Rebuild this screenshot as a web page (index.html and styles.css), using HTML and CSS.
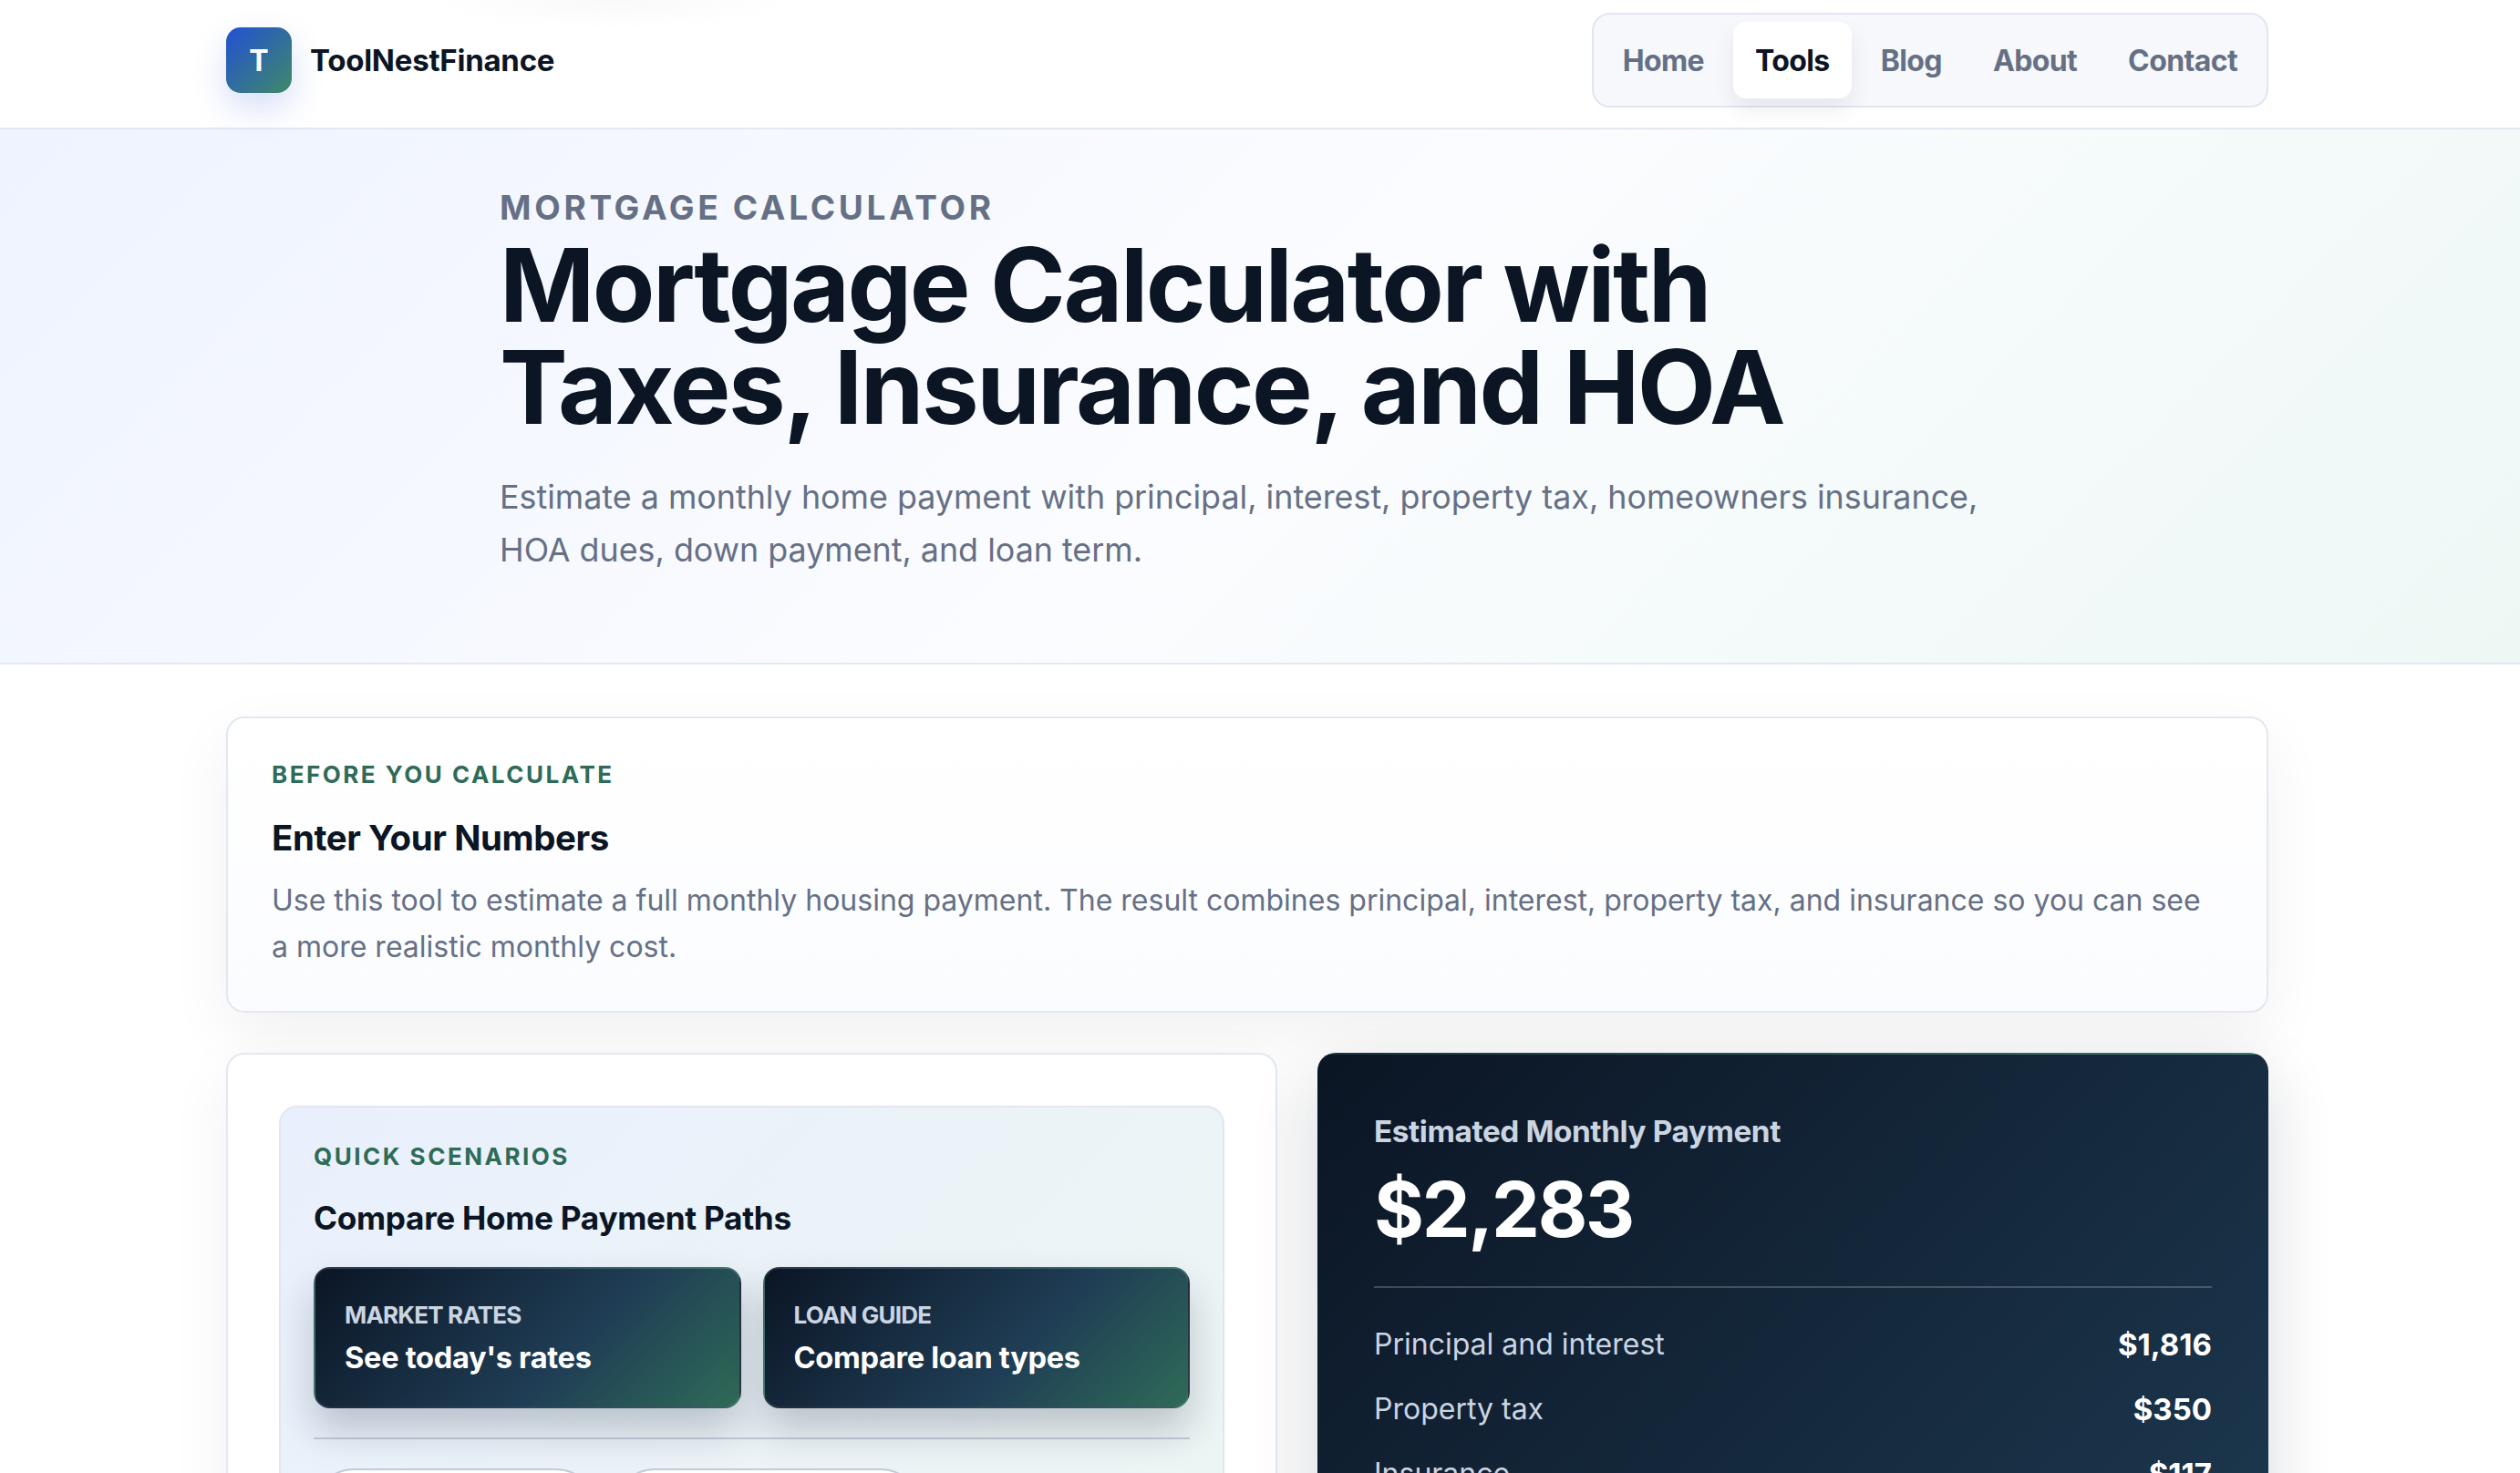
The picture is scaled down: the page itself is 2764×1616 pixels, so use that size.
FILE: index.html
```html
<!DOCTYPE html>
<html lang="en">
<head>
<meta charset="utf-8">
<title>Mortgage Calculator</title>
<link rel="stylesheet" href="styles.css">
</head>
<body>
<header class="site-header">
  <div class="wrap header-row">
    <a class="brand"><span class="brand-mark">T</span><span class="brand-name">ToolNestFinance</span></a>
    <nav class="nav">
      <a class="nav-link">Home</a>
      <a class="nav-link active">Tools</a>
      <a class="nav-link">Blog</a>
      <a class="nav-link">About</a>
      <a class="nav-link">Contact</a>
    </nav>
  </div>
</header>
<section class="hero">
  <div class="hero-inner">
    <p class="hero-kicker">MORTGAGE CALCULATOR</p>
    <h1 class="hero-title">Mortgage Calculator with Taxes, Insurance, and HOA</h1>
    <p class="hero-sub">Estimate a monthly home payment with principal, interest, property tax, homeowners insurance, HOA dues, down payment, and loan term.</p>
  </div>
</section>
<main class="wrap main">
  <section class="intro card">
    <p class="eyebrow">BEFORE YOU CALCULATE</p>
    <h2 class="intro-title">Enter Your Numbers</h2>
    <p class="intro-text">Use this tool to estimate a full monthly housing payment. The result combines principal, interest, property tax, and insurance so you can see a more realistic monthly cost.</p>
  </section>
  <div class="columns">
    <section class="form-card card">
      <div class="scenarios">
        <p class="eyebrow">QUICK SCENARIOS</p>
        <h3 class="scenarios-title">Compare Home Payment Paths</h3>
        <div class="link-grid">
          <a class="link-card"><span class="link-label">MARKET RATES</span><span class="link-text">See today's rates</span></a>
          <a class="link-card"><span class="link-label">LOAN GUIDE</span><span class="link-text">Compare loan types</span></a>
        </div>
        <div class="chips">
          <span class="chip chip-a"></span>
          <span class="chip chip-b"></span>
        </div>
      </div>
    </section>
    <aside class="result">
      <p class="result-label">Estimated Monthly Payment</p>
      <p class="result-value">$2,283</p>
      <div class="result-rows">
        <div class="result-row"><span>Principal and interest</span><strong>$1,816</strong></div>
        <div class="result-row"><span>Property tax</span><strong>$350</strong></div>
        <div class="result-row"><span>Insurance</span><strong>$117</strong></div>
      </div>
    </aside>
  </div>
</main>
</body>
</html>
```
FILE: styles.css
```css
* { box-sizing: border-box; }
html, body { margin: 0; height: 1616px; overflow: hidden; }
body { background: #fff; font-family: Inter, "Noto Sans", sans-serif; color: #0b1524; }
p, h1, h2, h3 { margin: 0; }
.wrap { width: 2240px; margin-left: 248px; }

.site-header { height: 142px; border-bottom: 2px solid #e2e8f0; background: radial-gradient(ellipse 200px 32px at 670px 0, #f9f9fa, rgba(255, 255, 255, 0)) #fff; }
.header-row { height: 140px; display: flex; align-items: center; justify-content: space-between; }
.brand { display: flex; align-items: center; gap: 20px; margin-top: -8px; }
.brand-mark { width: 72px; height: 72px; border-radius: 16px; background: linear-gradient(135deg, #2350d4, #3f8a68); color: #fff; font-size: 32px; font-weight: 700; display: flex; align-items: center; justify-content: center; box-shadow: 0 16px 36px rgba(35, 80, 212, .18); }
.brand-name { font-size: 33px; font-weight: 700; letter-spacing: -.25px; }
.nav { display: flex; height: 104px; padding: 8px; gap: 8px; background: #f7f8fc; border: 2px solid #e1e6f0; border-radius: 20px; margin-top: -8px; }
.nav-link { display: flex; align-items: center; padding: 0 24px; border-radius: 14px; font-size: 32px; font-weight: 700; color: #667085; letter-spacing: -.62px; }
.nav-link.active { background: #fff; color: #0b1524; box-shadow: 0 12px 24px rgba(15, 23, 42, .08); }

.hero { height: 587px; border-bottom: 2px solid #e2e8f0; background: linear-gradient(135deg, #eef3ff 0%, #fbfcff 50%, #edf8f5 100%); padding: 64px 0 0 548px; }
.hero-inner { width: 1668px; }
.hero-kicker { font-size: 37px; font-weight: 700; letter-spacing: 3.7px; color: #667085; line-height: 44px; }
.hero-title { font-size: 112px; font-weight: 700; letter-spacing: -2.5px; line-height: 112px; margin-top: 6px; color: #0b1524; }
.hero-sub { font-size: 35.84px; line-height: 58px; color: #667085; margin-top: 36px; }

.main { padding-top: 57px; }
.card { background: #fff; border: 2px solid #e2e8f0; border-radius: 20px; box-shadow: 0 24px 70px rgba(15, 23, 42, .06); }
.intro { height: 325px; padding: 46px 48px 0; background: linear-gradient(180deg, #fff, #fbfcff); }
.eyebrow { font-size: 26px; font-weight: 700; letter-spacing: 2.5px; color: #2f6b57; line-height: 32px; }
.intro-title { font-size: 38.4px; font-weight: 700; letter-spacing: -.4px; line-height: 46px; margin-top: 30px; }
.intro-text { font-size: 32px; line-height: 51px; color: #667085; margin-top: 20px; }
.columns { display: grid; grid-template-columns: 1153px 1043px; gap: 44px; margin-top: 44px; }
.form-card { height: 600px; padding: 56px; }
.scenarios { height: 600px; background: linear-gradient(135deg, #e9f0fd, #edf6f3); border: 2px solid #e1e6f0; border-radius: 20px; padding: 38px 36px; }
.scenarios-title { font-size: 35.2px; font-weight: 700; letter-spacing: -.3px; line-height: 44px; margin-top: 29px; }
.link-grid { display: grid; grid-template-columns: 1fr 1fr; gap: 24px; margin-top: 32px; padding-bottom: 32px; border-bottom: 2px solid #c3cbd8; }
.link-card { height: 155px; display: flex; flex-direction: column; justify-content: center; gap: 11px; padding: 0 32px; border-radius: 18px; border: 2px solid rgba(255, 255, 255, .1); background: linear-gradient(135deg, #0b1524, #1f3d55 60%, #2f6b57); box-shadow: 0 24px 44px rgba(15, 23, 42, .22); }
.link-label { font-size: 26px; font-weight: 700; letter-spacing: -.8px; color: #cbd5e1; }
.link-text { font-size: 32.6px; font-weight: 700; letter-spacing: -.3px; color: #fff; }
.chips { display: flex; gap: 20px; margin-top: 32px; }
.chip { height: 88px; background: #fff; border: 2px solid #c3cbd8; border-radius: 44px; }
.chip-a { width: 310px; }
.chip-b { width: 336px; }

.result { height: 1600px; padding: 66px 62px 0; border-radius: 20px; background: linear-gradient(90deg, #1a3040, #3f7a68) 0 0 / 100% 2px no-repeat, linear-gradient(135deg, #0b1524, #1f3d55 70%, #2f6b57); box-shadow: 0 24px 70px rgba(15, 23, 42, .16); }
.result-label { font-size: 33.3px; font-weight: 700; letter-spacing: -.4px; color: #cbd5e1; line-height: 40px; }
.result-value { font-size: 84px; font-weight: 700; letter-spacing: -2.3px; line-height: 100px; color: #fff; margin-top: 16px; }
.result-rows { margin-top: 34px; padding-top: 26px; border-top: 2px solid rgba(255, 255, 255, .2); }
.result-row { display: flex; justify-content: space-between; align-items: center; height: 71px; font-size: 32px; color: #cbd5e1; }
.result-row strong { color: #fff; font-weight: 700; font-size: 33px; }
```
